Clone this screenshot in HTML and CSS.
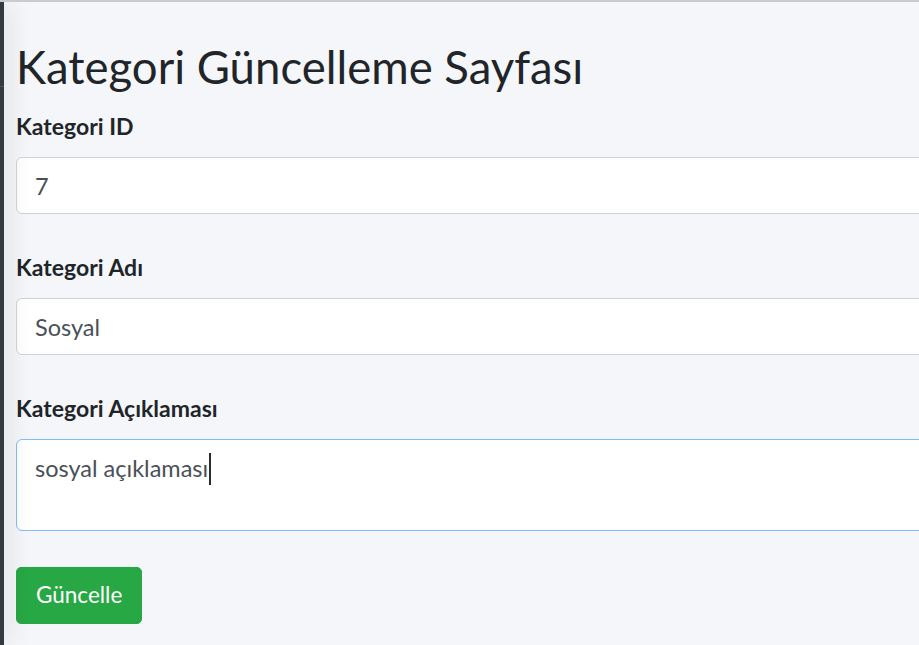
FILE: index.html
```html
<!DOCTYPE html>
<html lang="tr">
<head>
<meta charset="utf-8">
<title>Kategori Güncelleme Sayfası</title>
<link rel="stylesheet" href="styles.css">
</head>
<body>
<div class="layout">
  <aside class="sidebar"><div class="brand"></div></aside>
  <main class="content">
    <h1 class="page-title">Kategori Güncelleme Sayfası</h1>
    <form class="form">
      <div class="form-group">
        <label class="form-label" for="id">Kategori ID</label>
        <input class="form-control" id="id" type="text" value="7">
      </div>
      <div class="form-group">
        <label class="form-label" for="ad">Kategori Adı</label>
        <input class="form-control" id="ad" type="text" value="Sosyal">
      </div>
      <div class="form-group">
        <label class="form-label">Kategori Açıklaması</label>
        <div class="form-control textarea" role="textbox">sosyal açıklaması<span class="caret"></span></div>
      </div>
      <button type="button" class="btn-success">Güncelle</button>
    </form>
  </main>
</div>
</body>
</html>
```
FILE: styles.css
```css
html, body {
  margin: 0;
  padding: 0;
}
body {
  background: #f4f6f9;
  border-top: 2px solid #cbcbcb;
  overflow: hidden;
  height: 643px;
  font-family: Lato, "Noto Sans", sans-serif;
  color: #212529;
}
.layout {
  display: flex;
  height: 100%;
}
.sidebar {
  width: 4px;
  flex: none;
  background: #343a40;
  position: relative;
  z-index: 2;
  box-shadow: 5px 0 20px rgba(0, 0, 0, 0.22);
}
.brand {
  height: 84px;
  border-bottom: 1px solid #4b545c;
}
.content {
  flex: none;
  width: 1100px;
  padding: 0 12px;
}
.page-title {
  margin: 38px 0 15px 0;
  font-size: 45.5px;
  font-weight: 400;
  line-height: 54px;
  color: #212529;
}
.form {
  display: flex;
  flex-direction: column;
  align-items: flex-start;
}
.form-group {
  align-self: stretch;
  display: flex;
  flex-direction: column;
  margin-bottom: 36px;
}
.form-label {
  font-size: 23px;
  font-weight: 700;
  line-height: 34px;
  margin-bottom: 14px;
  color: #212529;
}
.form-control {
  box-sizing: border-box;
  height: 57px;
  padding: 0 18px;
  border: 1px solid #ced4da;
  border-radius: 6px;
  background: #fff;
  font-family: inherit;
  font-size: 23.5px;
  color: #495057;
  outline: none;
}
.textarea {
  height: 92px;
  padding: 11px 18px;
  line-height: 34.5px;
  border-color: #80bdff;
}
.caret {
  display: inline-block;
  width: 2px;
  height: 32px;
  background: #2b2b2b;
  vertical-align: -8px;
  margin-left: 1px;
}
.btn-success {
  box-sizing: border-box;
  height: 57px;
  padding: 0 19px 2px;
  border: 1px solid #28a745;
  border-radius: 5px;
  background: #28a745;
  color: #fff;
  font-family: inherit;
  font-size: 22.5px;
  cursor: pointer;
}
```
